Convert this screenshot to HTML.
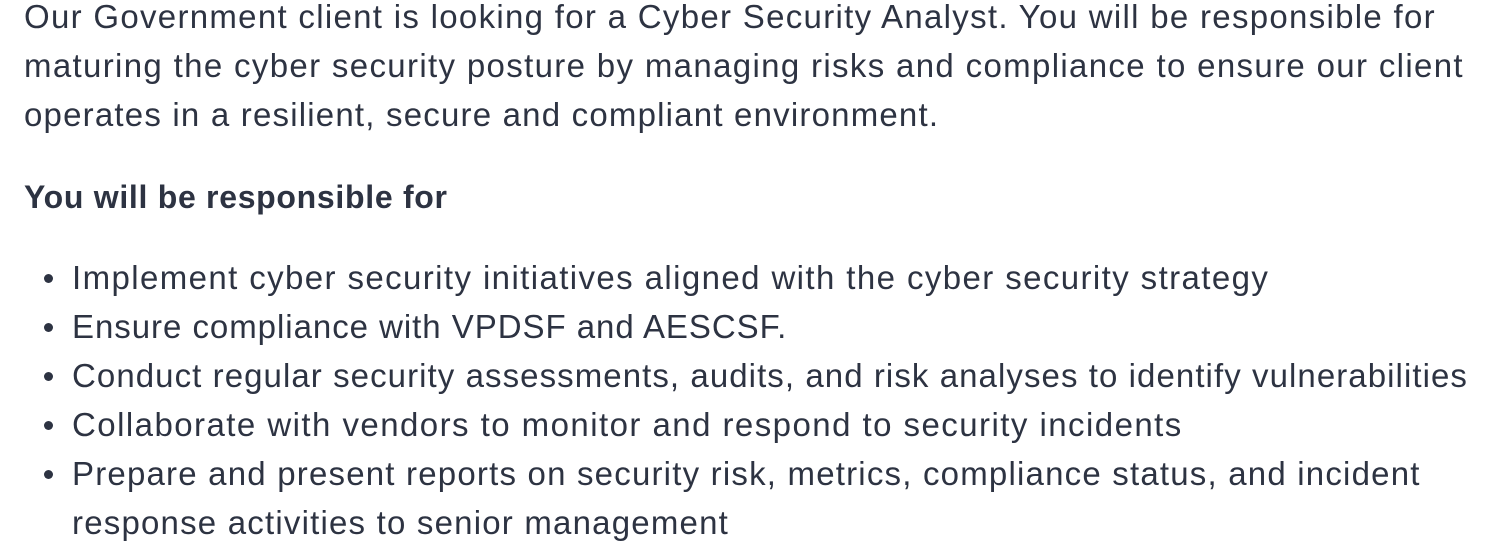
<!DOCTYPE html>
<html><head><meta charset="utf-8"><style>
html,body{margin:0;padding:0;background:#fff;width:1500px;height:554px;overflow:hidden}
body{font-family:"Liberation Sans",sans-serif;color:#2d3342;font-size:33px;line-height:49px;letter-spacing:1.2px}
.l{position:absolute;white-space:nowrap;left:24px}
.b{left:72px}
.b.d::before{content:"";position:absolute;left:-28px;top:21px;width:9px;height:9px;border-radius:50%;background:#2d3342}
h{font-weight:bold;font-size:32px;letter-spacing:0.7px}
</style></head><body>
<div class="l" style="top:-8px;letter-spacing:1.3px">Our Government client is looking for a Cyber Security Analyst. You will be responsible for</div>
<div class="l" style="top:41px;letter-spacing:1.34px">maturing the cyber security posture by managing risks and compliance to ensure our client</div>
<div class="l" style="top:90px">operates in a resilient, secure and compliant environment.</div>
<div class="l" style="top:172px"><h>You will be responsible for</h></div>
<div class="l b d" style="top:253px;letter-spacing:1.4px">Implement cyber security initiatives aligned with the cyber security strategy</div>
<div class="l b d" style="top:302px;letter-spacing:0.96px">Ensure compliance with VPDSF and AESCSF.</div>
<div class="l b d" style="top:351px;letter-spacing:1.07px">Conduct regular security assessments, audits, and risk analyses to identify vulnerabilities</div>
<div class="l b d" style="top:400px;letter-spacing:1.45px">Collaborate with vendors to monitor and respond to security incidents</div>
<div class="l b d" style="top:449px">Prepare and present reports on security risk, metrics, compliance status, and incident</div>
<div class="l b" style="top:498px">response activities to senior management</div>
</body></html>
